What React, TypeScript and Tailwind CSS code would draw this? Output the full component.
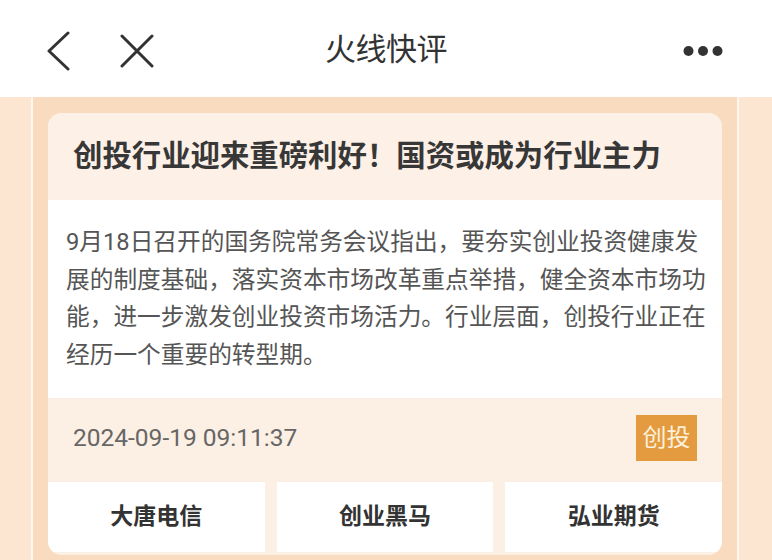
import React from 'react';

const font = { fontFamily: 'Roboto, "Noto Sans CJK SC", sans-serif' };

const links = ['大唐电信', '创业黑马', '弘业期货'];

function TopBar() {
  return (
    <header className="h-[97px] shrink-0 grid grid-cols-[1fr_auto_1fr] items-center bg-white pt-[4px]">
      <div className="flex items-center pl-[46px] gap-[48px]">
        <svg width="26" height="40" viewBox="0 0 26 40" fill="none">
          <path d="M22 2 L3 20 L22 38" stroke="#333" strokeWidth="3" strokeLinecap="round" strokeLinejoin="round" />
        </svg>
        <svg width="34" height="34" viewBox="0 0 34 34" fill="none">
          <path d="M2 2 L32 32 M32 2 L2 32" stroke="#333" strokeWidth="3" strokeLinecap="round" />
        </svg>
      </div>
      <h1 className="text-[31px] font-normal text-[#333] tracking-[-0.5px]">火线快评</h1>
      <div className="flex justify-end pr-[49px]">
        <svg width="40" height="12" viewBox="0 0 40 12">
          <circle cx="5.5" cy="6" r="5" fill="#333" />
          <circle cx="20" cy="6" r="5" fill="#333" />
          <circle cx="34.5" cy="6" r="5" fill="#333" />
        </svg>
      </div>
    </header>
  );
}

export default function App() {
  return (
    <div className="w-[772px] h-[560px] overflow-hidden flex flex-col bg-white" style={font}>
      <TopBar />
      <main className="flex-1 flex min-h-0">
        <div className="w-[31px] bg-[#fce6d1]" />
        <div className="w-[2px] bg-[#fff6ec]" />
        <div className="w-[704px] bg-[#f9dcbf] px-[15px] pt-[16px]">
          <div className="rounded-[14px] overflow-hidden bg-[#fcefe4]">
            <div className="h-[87px] flex items-center px-[25px] bg-[#fdf0e6]">
              <h2 className="text-[29.4px] font-bold text-[#373737] leading-none">
                创投行业迎来重磅利好！国资或成为行业主力
              </h2>
            </div>
            <div className="bg-white pl-[18px] pr-[14px] pt-[24px] pb-[24px]">
              <p className="text-[23.7px] leading-[37.5px] text-[#555]">
                9月18日召开的国务院常务会议指出，要夯实创业投资健康发展的制度基础，落实资本市场改革重点举措，健全资本市场功能，进一步激发创业投资市场活力。行业层面，创投行业正在经历一个重要的转型期。
              </p>
            </div>
            <div className="pt-[17px] pb-[3px] bg-[#fcefe4]">
              <div className="h-[46px] flex items-center justify-between px-[25px]">
                <span className="text-[24.5px] text-[#666]">2024-09-19 09:11:37</span>
                <span className="h-[46px] w-[61px] flex items-center justify-center bg-[#e49b40] text-[#fdf1dc] text-[24px]">
                  创投
                </span>
              </div>
              <div className="mt-[21px] grid grid-cols-3 gap-[12px]">
                {links.map((name) => (
                  <div key={name} className="h-[70px] bg-white flex items-center justify-center text-[23px] font-bold text-[#333]">
                    {name}
                  </div>
                ))}
              </div>
            </div>
          </div>
        </div>
        <div className="w-[2px] bg-[#fff6ec]" />
        <div className="flex-1 bg-[#fce6d1]" />
      </main>
    </div>
  );
}
